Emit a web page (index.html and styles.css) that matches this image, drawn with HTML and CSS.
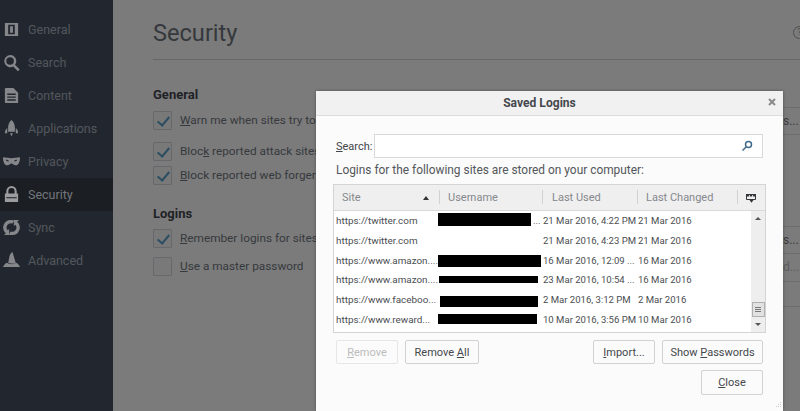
FILE: index.html
```html
<!DOCTYPE html>
<html lang="en">
<head>
<meta charset="utf-8">
<title>Security</title>
<link rel="stylesheet" href="styles.css">
</head>
<body>
<div class="app">
  <nav class="side">
    <div class="nav"><svg class="ni" viewBox="0 0 18 18"><path fill-rule="evenodd" d="M2 2h14v14H2zM5.500 4v10h7V4zM7.500 5.500h3v7h-3z"/></svg><span>General</span></div>
    <div class="nav"><svg class="ni" viewBox="0 0 18 18"><path fill-rule="evenodd" d="M7.500 1a6.500 6.500 0 0 1 5.200 10.400l5 5-1.900 1.900-5-5A6.500 6.500 0 1 1 7.500 1zm0 2.500a4 4 0 1 0 0 8 4 4 0 0 0 0-8z"/></svg><span>Search</span></div>
    <div class="nav"><svg class="ni" viewBox="0 0 18 18"><path fill-rule="evenodd" d="M3 1h8l5 5v11H3a1 1 0 0 1-1-1V2a1 1 0 0 1 1-1zM4.500 7v1.500h9V7zm0 3v1.500h9V10zm0 3v1.500h9V13z"/></svg><span>Content</span></div>
    <div class="nav"><svg class="ni" viewBox="0 0 18 18"><path d="M9 0c2.500 2 3.600 5 3.600 8v4.500H5.400V8C5.400 5 6.500 2 9 0zM4.500 8.500v5.500H2c0-2.500 1-4.500 2.500-5.500zM13.500 8.500c1.500 1 2.500 3 2.500 5.500h-2.500zM7.500 14h3L9 17.500z"/></svg><span>Applications</span></div>
    <div class="nav"><svg class="ni" viewBox="0 0 18 18"><path fill-rule="evenodd" d="M0 4.500c3 0 6 1 9 1s6-1 9-1c0 5-1.500 8.500-4.500 8.500-2.200 0-3-2-4.500-2s-2.300 2-4.500 2C1.500 13 0 9.500 0 4.500zM3 7.200c.3 1.300 1.700 2 3.500 1.600-.5-1.200-2-1.800-3.500-1.600zm12 0c-1.500-.2-3 .4-3.500 1.600 1.800.4 3.200-.3 3.500-1.600z"/></svg><span>Privacy</span></div>
    <div class="nav current"><svg class="ni" viewBox="0 0 18 18"><path fill-rule="evenodd" d="M9 0a5.500 5.500 0 0 1 5.500 5.500V8H16v9H2V8h1.500V5.500A5.500 5.500 0 0 1 9 0zm0 2.200a3.300 3.300 0 0 0-3.300 3.300V8h6.600V5.500A3.300 3.300 0 0 0 9 2.200zM3.500 12v1h11v-1z"/></svg><span>Security</span></div>
    <div class="nav"><svg class="ni" viewBox="0 0 18 18"><path d="M9 1c1 0 2 .2 2.800.7L10 4.800A4.500 4.500 0 0 0 5 12l1.500-1.500V17H1l2 -2A8 8 0 0 1 9 1zM9 17c-1 0-2-.2-2.800-.7L8 13.200A4.500 4.500 0 0 0 13 6l-1.500 1.500V1H17l-2 2A8 8 0 0 1 9 17z"/></svg><span>Sync</span></div>
    <div class="nav"><svg class="ni" viewBox="0 0 18 18"><path fill-rule="evenodd" d="M10 0l3.500 11.500c-1.500 1.200-6.500 1.200-8 0L7 4c.8-2 1.800-3.300 3-4zM4.200 11.500c2 2 7.600 2 9.600 0 1.600.5 3.200 2 4.200 4.500H0c1-2.500 2.600-4 4.200-4.500z"/></svg><span>Advanced</span></div>
  </nav>
  <main class="main">
    <h1 class="title">Security</h1>
    <section class="group first">
      <h2>General</h2>
      <div class="opt o1"><span class="cb on"></span><span><u>W</u>arn me when sites try to install add-ons</span></div>
      <div class="opt o2"><span class="cb on"></span><span>Bloc<u>k</u> reported attack sites</span></div>
      <div class="opt o3"><span class="cb on"></span><span><u>B</u>lock reported web forgeries</span></div>
    </section>
    <section class="group second">
      <h2>Logins</h2>
      <div class="opt o4"><span class="cb on"></span><span><u>R</u>emember logins for sites</span></div>
      <div class="opt o5"><span class="cb"></span><span><u>U</u>se a master password</span></div>
    </section>
  </main>
</div>

<div class="ghosts g-top"><div class="ghost">s...</div></div>
<div class="ghosts g-low"><div class="ghost">s...</div><div class="ghost faint">d...</div><div class="rule"></div></div>
<div class="help">?</div>

<div class="dialog">
  <header class="dh"><span>Saved Logins</span><svg class="x" viewBox="0 0 8 8"><path d="M1 1l6 6M7 1L1 7"/></svg></header>
  <div class="db">
    <div class="search">
      <label><u>S</u>earch:</label>
      <div class="input"><svg viewBox="0 0 12 12"><circle cx="7.500" cy="4.500" r="3"/><path d="M5.300 6.700L1.500 10.500"/></svg></div>
    </div>
    <p class="note">Logins for the following sites are stored on your computer:</p>
    <div class="tree">
      <div class="thead">
        <div class="th c1"><span>Site</span><i class="sort"></i></div>
        <div class="th c2">Username</div>
        <div class="th c3">Last Used</div>
        <div class="th c4">Last Changed</div>
        <div class="th c5"><svg viewBox="0 0 10 10"><path d="M.5 1.500h9v5h-9z"/><path class="f" d="M0 1h3v2.500H0zM3.800 1h2.400v2.500H3.800zM7 1h3v2.500H7zM3.500 7h4L5.500 9.700z"/></svg></div>
      </div>
      <div class="tbody">
        <div class="rows">
          <div class="row"><span class="c1">https://twitter.com</span><span class="c2"><b class="red r1"></b><span class="dots">...</span></span><span class="c3">21 Mar 2016, 4:22 PM</span><span class="c4">21 Mar 2016</span></div>
          <div class="row"><span class="c1">https://twitter.com</span><span class="c2"></span><span class="c3">21 Mar 2016, 4:23 PM</span><span class="c4">21 Mar 2016</span></div>
          <div class="row"><span class="c1">https://www.amazon....</span><span class="c2"><b class="red r2"></b></span><span class="c3">16 Mar 2016, 12:09 ...</span><span class="c4">16 Mar 2016</span></div>
          <div class="row"><span class="c1">https://www.amazon....</span><span class="c2"><b class="red r3"></b></span><span class="c3">23 Mar 2016, 10:54 ...</span><span class="c4">16 Mar 2016</span></div>
          <div class="row"><span class="c1">https://www.faceboo...</span><span class="c2"><b class="red r4"></b></span><span class="c3">2 Mar 2016, 3:12 PM</span><span class="c4">2 Mar 2016</span></div>
          <div class="row"><span class="c1">https://www.reward...</span><span class="c2"><b class="red r5"></b></span><span class="c3">10 Mar 2016, 3:56 PM</span><span class="c4">10 Mar 2016</span></div>
        </div>
        <div class="sb">
          <i class="up"></i>
          <div class="thumb"><s></s><s></s><s></s></div>
          <i class="down"></i>
        </div>
      </div>
    </div>
    <div class="btns">
      <button class="btn off"><u>R</u>emove</button>
      <button class="btn rall">Remove <u>A</u>ll</button>
      <span class="grow"></span>
      <button class="btn imp"><u>I</u>mport...</button>
      <button class="btn show">Show <u>P</u>asswords</button>
    </div>
    <div class="closerow"><button class="btn close"><u>C</u>lose</button></div>
  </div>
  <svg class="grip" viewBox="0 0 6 6"><path d="M4 0h1v1H4zM2 2h1v1H2zM4 2h1v1H4zM0 4h1v1H0zM2 4h1v1H2zM4 4h1v1H4z"/></svg>
</div>
</body>
</html>
```
FILE: styles.css
```css
* { box-sizing: border-box; }
html, body { margin: 0; height: 100%; overflow: hidden; }
body { font-family: Roboto, "Liberation Sans", sans-serif; background: #7b7b7b; position: relative; }
.app { display: flex; height: 411px; }
.side { width: 113px; flex: none; background: #22272f; padding-top: 13px; }
.nav { height: 33px; display: flex; align-items: center; gap: 8px; padding-left: 3px; color: #53575d; font-size: 12.500px; }
.nav.current { background: #1b1e23; color: #73767b; }
.ni { width: 17px; height: 17px; fill: #85878a; flex: none; }
.nav.current .ni { fill: #9b9c9e; }
.main { flex: 1; padding-left: 40px; color: #2f3236; }
.title { margin: 0; font-size: 23.600px; font-weight: 400; line-height: 34px; padding-top: 16px; height: 60px; border-bottom: 1px solid #65676a; color: #35383c; }
.group h2 { margin: 0; font-size: 13px; font-weight: 700; line-height: 18px; color: #1f2226; }
.first { padding-top: 26px; }
.second { padding-top: 20px; }
.opt { display: flex; align-items: center; gap: 8px; font-size: 11.800px; line-height: 19px; color: #36393d; white-space: nowrap; }
.cb { width: 19px; height: 19px; border: 1px solid #66686b; background: #797979; border-radius: 1px; flex: none; position: relative; }
.cb.on::after { content: ""; position: absolute; left: 6px; top: 2px; width: 5px; height: 10px; border: solid #2b4d62; border-width: 0 2px 2px 0; transform: rotate(40deg); }
.o1 { margin-top: 7px; }
.o2 { margin-top: 12px; }
.o3 { margin-top: 5px; }
.o4 { margin-top: 6px; }
.o5 { margin-top: 9px; }
.ghosts { position: absolute; left: 783px; width: 17px; display: flex; flex-direction: column; }
.g-top { top: 107px; }
.g-low { top: 226px; }
.ghost { height: 28px; font-size: 12px; line-height: 27px; color: #3d3d3d; border-top: 1px solid #6c6c6c; border-bottom: 1px solid #6c6c6c; }
.ghost + .ghost { border-top: 0; }
.faint { color: #5d5d5d; }
.rule { height: 1px; margin-top: 24px; background: #6c6c6c; }
.help { position: absolute; left: 793px; top: 26px; width: 13px; height: 13px; border: 1px solid #4f4f4f; border-radius: 50%; font-size: 9px; line-height: 11px; text-align: center; color: #4f4f4f; }

.dialog { position: absolute; left: 316px; top: 91px; width: 467px; height: 320px; background: #fbfbfb; color: #424549; box-shadow: 0 0 3px rgba(0,0,0,.35); }
.dh { height: 25px; background: #f1f1f1; border-bottom: 1px solid #dcdcdc; display: flex; align-items: center; justify-content: center; padding-right: 20px; font-size: 12.100px; font-weight: 700; position: relative; color: #45484c; }
.x { position: absolute; right: 7px; top: 7px; width: 8px; height: 8px; fill: none; stroke: #8a8a8a; stroke-width: 2; }
.db { padding: 18px 20px 0; }
.search { display: flex; align-items: center; gap: 3px; }
.search label { font-size: 11px; width: 35px; flex: none; white-space: nowrap; }
.input { flex: 1; height: 24px; background: #fff; border: 1px solid #d9d9d9; display: flex; align-items: center; justify-content: flex-end; padding-right: 9px; }
.input svg { width: 12px; height: 12px; fill: none; stroke: #3f6a8c; stroke-width: 1.500; }
.note { margin: 4px 0 0; font-size: 11.900px; line-height: 16px; color: #53565a; white-space: nowrap; }
.tree { margin: 6px -3px 0; border: 1px solid #d4d4d4; background: #fff; }
.thead { display: flex; height: 26px; background: #efefef; border-bottom: 1px solid #d9d9d9; color: #85888c; font-size: 11px; }
.th { display: flex; align-items: center; padding-left: 9px; position: relative; }
.th + .th::before { content: ""; position: absolute; left: 0; top: 5px; bottom: 6px; width: 1px; background: #d2d2d2; }
.thead .c1 { width: 105px; justify-content: space-between; padding-left: 8px; padding-right: 10px; }
.thead .c2 { width: 103px; }
.thead .c3 { width: 95px; padding-left: 10px; }
.thead .c4 { width: 100px; }
.thead .c5 { flex: 1; justify-content: flex-start; padding-left: 9px; }
.c5 svg { width: 10px; height: 10px; fill: none; stroke: #33363a; stroke-width: 1; }
.c5 svg .f { fill: #33363a; stroke: none; }
.sort { width: 0; height: 0; border: 3.500px solid transparent; border-top: 0; border-bottom: 4px solid #333; }
.tbody { display: flex; height: 121px; }
.rows { flex: 1; min-width: 0; }
.row { display: flex; height: 19.700px; align-items: center; font-size: 9.550px; color: #4a4d51; white-space: nowrap; }
.row .c1 { width: 104px; padding-left: 2px; font-size: 9.900px; }
.row .c2 { width: 105px; position: relative; align-self: stretch; }
.row .c3 { width: 95px; }
.row .c4 { width: 100px; }
.red { position: absolute; background: #000; display: block; }
.dots { position: absolute; left: 95px; top: 0; line-height: 19.700px; }
.r1 { left: 0; top: 2px; width: 93px; height: 13px; }
.r2 { left: 0; top: 5px; width: 103px; height: 12px; }
.r3 { left: 1px; top: 6px; width: 99px; height: 7px; }
.r4 { left: 2px; top: 6px; width: 98px; height: 11px; }
.r5 { left: 0; top: 5px; width: 99px; height: 10px; }
.sb { width: 14px; flex: none; background: #eeeeee; position: relative; display: flex; flex-direction: column; align-items: center; justify-content: flex-end; padding-bottom: 6px; }
.up, .down { width: 0; height: 0; border: 3px solid transparent; display: block; }
.up { position: absolute; top: 6px; left: 4px; border-top: 0; border-bottom: 3px solid #555; }
.down { border-bottom: 0; border-top: 3px solid #555; margin-top: 6px; }
.thumb { width: 13px; height: 15px; background: #e2e2e2; border: 1px solid #b0b0b0; display: flex; flex-direction: column; gap: 1px; align-items: center; justify-content: center; }
.thumb s { display: block; width: 6px; height: 1px; background: #777; }
.btns { display: flex; margin-top: 7px; gap: 7px; }
.grow { flex: 1; }
.btn { height: 24px; padding: 0; background: #fbfbfb; border: 1px solid #d2d2d2; border-radius: 2px; font: 400 11px Roboto, "Liberation Sans", sans-serif; color: #45484c; }
.btn.off { width: 62px; color: #bcbcbc; border-color: #e6e6e6; }
.rall { width: 74px; }
.imp { width: 62px; }
.show { width: 101px; }
.closerow { display: flex; justify-content: flex-end; margin-top: 6px; }
.close { width: 62px; height: 25px; }
.grip { position: absolute; right: 1px; bottom: 3px; width: 6px; height: 6px; fill: #cfcfcf; }
```
